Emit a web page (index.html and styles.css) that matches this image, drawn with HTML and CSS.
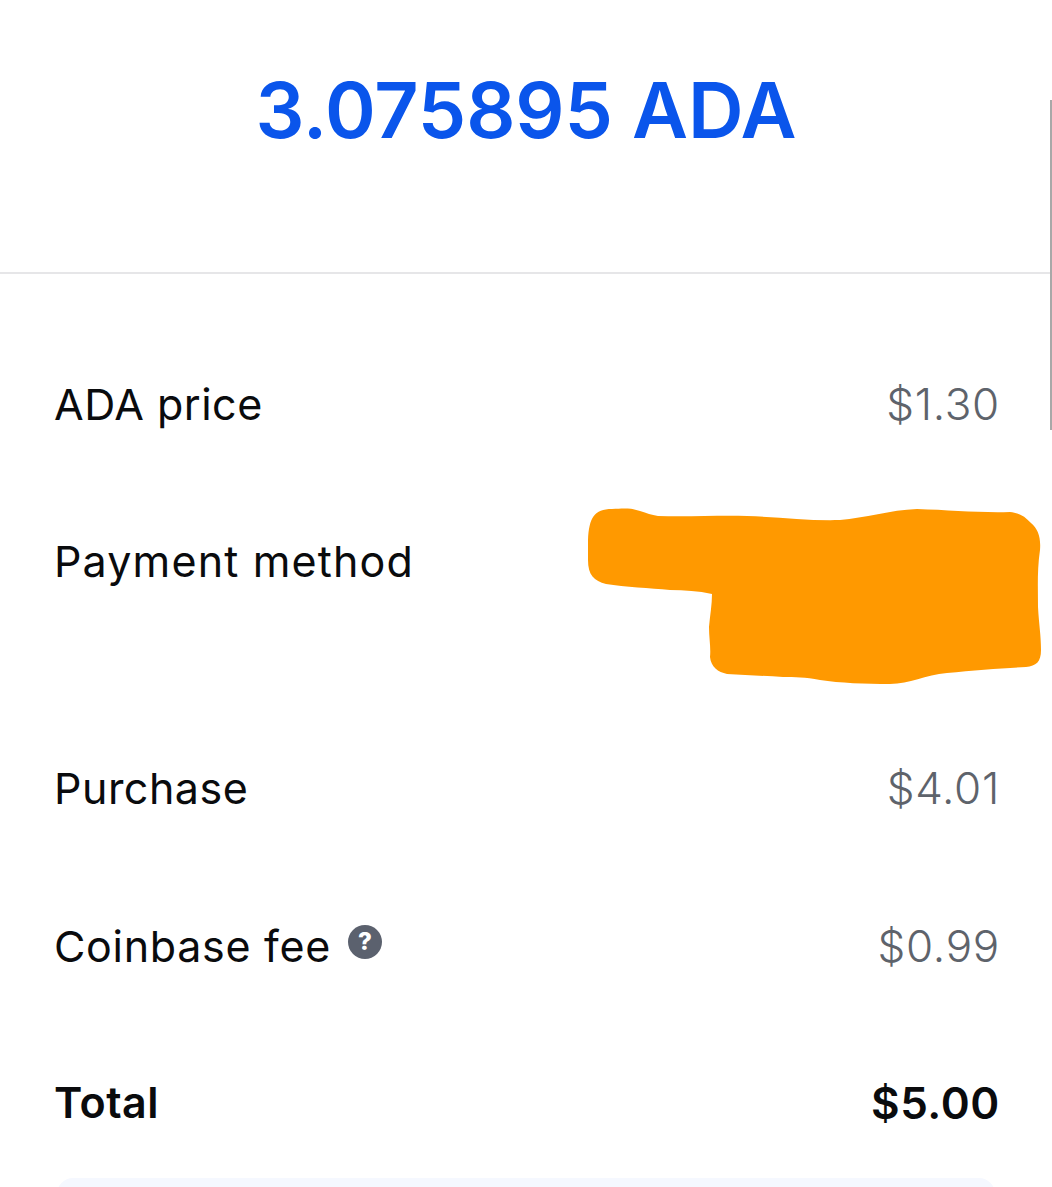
FILE: index.html
```html
<!DOCTYPE html>
<html lang="en">
<head>
    <meta charset="UTF-8">
    <meta name="viewport" content="width=device-width, initial-scale=1.0">
    <title>Order preview</title>
    <link rel="stylesheet" href="styles.css">
</head>
<body>
    <div class="page">
        <div class="scrollbar"></div>
        <header class="header">
            <h1 class="amount">3.075895 ADA</h1>
        </header>
        <section class="details">
            <div class="row">
                <span class="label">ADA price</span>
                <span class="value">$1.30</span>
            </div>
            <div class="row row-tall">
                <span class="label">Payment method</span>
                <svg class="scribble" viewBox="0 0 1052 1187" aria-hidden="true">
                    <path d="M588 540 C589 518 594 509 612 509 C625 508 632 508 640 511 C647 513 651 515 658 516 C690 517 720 515 747 516 C780 517 810 521 840 520 C865 518 890 510 917 509 C950 510 980 513 1010 512 C1020 513 1025 517 1031 523 C1038 529 1041 537 1040 550 C1037 570 1038 590 1038 607 C1039 625 1041 635 1041 650 C1041 662 1036 666 1026 667 C1005 668 975 670 947 673 C925 675 910 684 890 684 C865 684 840 683 820 680 C805 677 795 677 783 677 C765 676 745 675 727 674 C718 672 711 667 710 657 C711 648 709 638 709 627 C710 615 712 605 712 594 C698 591 685 590 670 590 C650 588 625 587 606 584 C594 581 588 575 588 560 Z"/>
                </svg>
            </div>
            <div class="row">
                <span class="label">Purchase</span>
                <span class="value">$4.01</span>
            </div>
            <div class="row">
                <span class="label label-fee">
                    Coinbase fee
                    <span class="help">?</span>
                </span>
                <span class="value">$0.99</span>
            </div>
            <div class="row row-total">
                <span class="label">Total</span>
                <span class="value">$5.00</span>
            </div>
        </section>
        <div class="notice"></div>
    </div>
</body>
</html>
```

FILE: styles.css
```css
html, body { margin: 0; padding: 0; background: #fff; }
body { font-family: Inter, "Liberation Sans", sans-serif; color: #0a0b0d; }
.page { position: relative; height: 1187px; overflow: hidden; }
.scrollbar { position: absolute; top: 100px; right: 0; width: 2px; height: 330px; background: #a8a8a8; }
.header { height: 272px; border-bottom: 2px solid #e6e6e8; display: flex; justify-content: center; }
.amount { margin: 66px 0 0; font-size: 77px; line-height: 88px; font-weight: 600; letter-spacing: -0.1px; color: #0a55eb; }
.details { padding: 51px 52px 0 54px; }
.row { display: flex; justify-content: space-between; align-items: center; height: 158px; font-size: 43px; letter-spacing: 0.5px; }
.row-tall { height: 226px; align-items: flex-start; }
.row-tall .label { margin-top: 49px; letter-spacing: 1.15px; }
.row-total { height: 153px; align-items: flex-start; box-sizing: border-box; padding-top: 48px; font-weight: 600; }
.row-total .value { margin-top: 1px; color: #0a0b0d; font-size: 44px; font-weight: 600; letter-spacing: 0.6px; }
.label { display: flex; align-items: center; gap: 18px; line-height: 58px; }
.label-fee { gap: 17px; letter-spacing: 0.7px; }
.value { color: #5e636b; font-size: 44px; font-weight: 350; line-height: 58px; letter-spacing: 0.7px; }
.help { display: flex; align-items: center; justify-content: center; width: 34px; height: 34px; margin-top: -8px; border-radius: 50%; background: #5b616e; color: #fff; font-size: 24px; font-weight: 800; line-height: 34px; letter-spacing: 0; }
.scribble { position: absolute; top: 0; left: 0; width: 1052px; height: 1187px; fill: #ff9900; }
.notice { height: 40px; margin: 0 57px; border-radius: 16px 16px 0 0; background: #f5f8ff; }
```
